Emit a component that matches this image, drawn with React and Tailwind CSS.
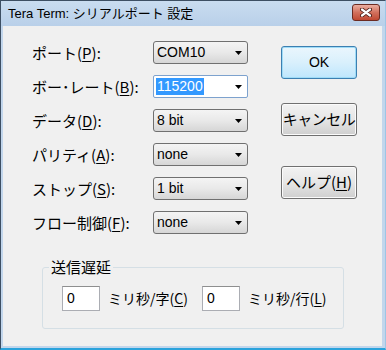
import React from 'react';

const JP = "font-['Noto_Sans_CJK_JP',sans-serif]";
const LATIN = "font-['Liberation_Sans','Noto_Sans_CJK_JP',sans-serif]";

const Arrow = () => (
  <svg width="7" height="4" viewBox="0 0 7 4" className="shrink-0">
    <path d="M0 0h7L3.5 4z" fill="#000" />
  </svg>
);

const Label = ({ pre, accel }) => (
  <span className={`${JP} text-[15px] leading-none text-black`}>
    {pre}(<span className="underline underline-offset-2">{accel}</span>):
  </span>
);

const Combo = ({ value, editable }) =>
  editable ? (
    <div className="w-[95px] h-[23px] flex items-center justify-between pl-[2px] pr-[5px] bg-white border border-[#7da2ce] rounded-[2px]">
      <span className={`${LATIN} text-[14px] leading-[17px] px-[1px] bg-[#3399ff] text-white`}>{value}</span>
      <Arrow />
    </div>
  ) : (
    <div className="w-[95px] h-[23px] flex items-center justify-between pl-[3px] pr-[5px] border border-[#707070] rounded-[3px] bg-linear-to-b from-[#f4f4f4] via-[#e9e9e9] to-[#d6d6d6]">
      <span className={`${LATIN} text-[14px] text-black`}>{value}</span>
      <Arrow />
    </div>
  );

const rows = [
  { pre: 'ポート', accel: 'P', value: 'COM10' },
  { pre: 'ボー･レート', accel: 'B', value: '115200', editable: true },
  { pre: 'データ', accel: 'D', value: '8 bit' },
  { pre: 'パリティ', accel: 'A', value: 'none' },
  { pre: 'ストップ', accel: 'S', value: '1 bit' },
  { pre: 'フロー制御', accel: 'F', value: 'none' },
];

const Button = ({ children, primary, className = '' }) => (
  <div
    className={`w-[76px] h-[33px] flex items-center justify-center rounded-[3px] border ${
      primary
        ? 'border-[#3c7fb1] bg-linear-to-b from-[#eaf6fd] via-[#d9f0fc] to-[#bee6fd] shadow-[inset_0_0_0_1px_#9fdcf7]'
        : 'border-[#707070] bg-linear-to-b from-[#f2f2f2] via-[#e6e6e6] to-[#cfcfcf] shadow-[inset_0_0_0_1px_#fbfbfb]'
    } ${className}`}
  >
    {children}
  </div>
);

const TextBox = ({ value }) => (
  <div className={`w-[38px] h-[25px] flex items-center pl-[4px] bg-white border border-[#abadb3] border-t-[#8e8f8f] ${LATIN} text-[14px] text-black`}>
    {value}
  </div>
);

export default function App() {
  return (
    <div className="w-[386px] h-[350px] flex flex-col bg-[#c2d6ec] border-l border-t border-[#3d4f63] border-r border-r-[#9cc6e6] border-b-2 border-b-[#2aa3dc] overflow-hidden">
      {/* title bar */}
      <div className="h-[25px] shrink-0 flex items-center justify-between pl-[7px] pr-[5px] bg-linear-to-b from-[#c9dcf0] to-[#b9d0e9]">
        <span className={`${LATIN} text-[13px] text-black`}>Tera Term: シリアルポート 設定</span>
        <div className="w-[28px] h-[17px] mt-[-3px] flex items-center justify-center rounded-[3px] border border-[#6b2b22] bg-linear-to-b from-[#eaaea1] via-[#d2705d] to-[#c04832]">
          <svg width="12" height="9" viewBox="0 0 12 9">
            <path d="M2 1.5l8 6M10 1.5l-8 6" stroke="#4a1a14" strokeWidth="4" strokeLinecap="round" />
            <path d="M2 1.5l8 6M10 1.5l-8 6" stroke="#fff" strokeWidth="2.2" strokeLinecap="round" />
          </svg>
        </div>
      </div>

      {/* client area */}
      <div className="flex-1 ml-[2px] mr-[3px] mb-[2px] bg-[#f0f0f0] flex flex-col">
        <div className="flex pt-[15px] pl-[29px]">
          <div className="flex flex-col gap-[11px]">
            {rows.map((r) => (
              <div key={r.accel} className="flex items-center h-[23px]">
                <div className="w-[121px]">
                  <Label pre={r.pre} accel={r.accel} />
                </div>
                <Combo value={r.value} editable={r.editable} />
              </div>
            ))}
          </div>
          <div className="flex flex-col ml-[33px] pt-[5px]">
            <Button primary>
              <span className={`${LATIN} text-[14px] text-black`}>OK</span>
            </Button>
            <Button className="mt-[24px]">
              <span className={`${JP} text-[15px] text-black tracking-[-0.5px]`}>キャンセル</span>
            </Button>
            <Button className="mt-[30px]">
              <span className={`${JP} text-[15px] text-black`}>
                ヘルプ(<span className="underline underline-offset-2">H</span>)
              </span>
            </Button>
          </div>
        </div>

        {/* send delay group */}
        <fieldset className="ml-[39px] mt-[24px] w-[302px] border border-[#d5dfe5] rounded-[3px] pl-[19px] pb-[17px]">
          <legend className={`${JP} text-[15px] leading-[18px] text-black ml-[-13px] px-[2px]`}>送信遅延</legend>
          <div className="flex items-center mt-[10px]">
            <TextBox value="0" />
            <span className={`${JP} text-[14px] text-black ml-[8px]`}>
              ミリ秒/字(<span className="underline underline-offset-2">C</span>)
            </span>
            <div className="ml-[14px]">
              <TextBox value="0" />
            </div>
            <span className={`${JP} text-[14px] text-black ml-[8px]`}>
              ミリ秒/行(<span className="underline underline-offset-2">L</span>)
            </span>
          </div>
        </fieldset>
      </div>
    </div>
  );
}
